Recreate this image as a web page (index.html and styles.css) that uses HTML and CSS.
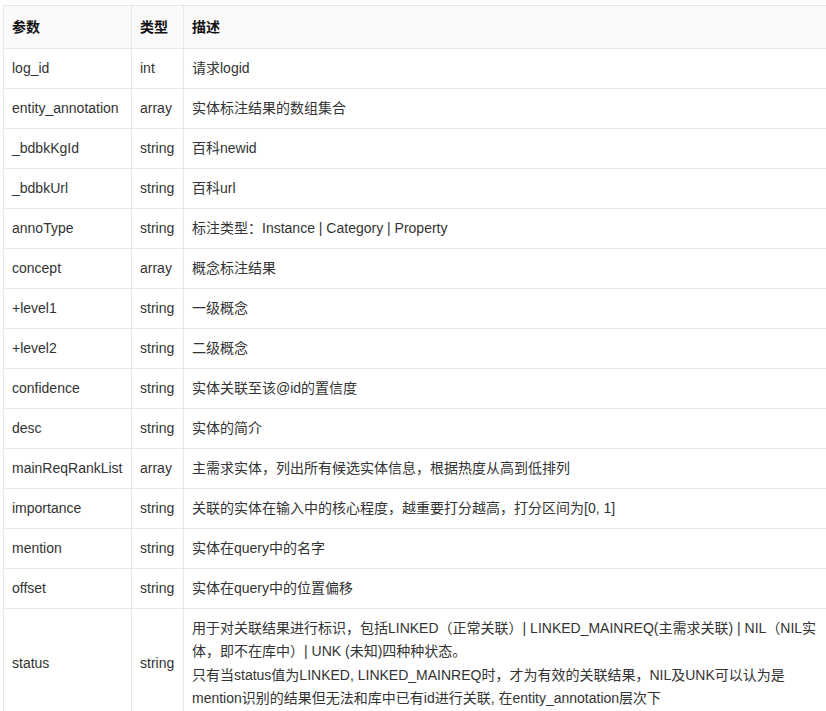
FILE: index.html
```html
<!DOCTYPE html>
<html lang="zh">
<head>
<meta charset="utf-8">
<link rel="stylesheet" href="styles.css">
</head>
<body>
<table class="params">
  <colgroup><col class="c1"><col class="c2"><col class="c3"></colgroup>
  <thead>
    <tr><th>参数</th><th>类型</th><th>描述</th></tr>
  </thead>
  <tbody>
    <tr><td>log_id</td><td>int</td><td>请求logid</td></tr>
    <tr><td>entity_annotation</td><td>array</td><td>实体标注结果的数组集合</td></tr>
    <tr><td>_bdbkKgId</td><td>string</td><td>百科newid</td></tr>
    <tr><td>_bdbkUrl</td><td>string</td><td>百科url</td></tr>
    <tr><td>annoType</td><td>string</td><td>标注类型：Instance | Category | Property</td></tr>
    <tr><td>concept</td><td>array</td><td>概念标注结果</td></tr>
    <tr><td>+level1</td><td>string</td><td>一级概念</td></tr>
    <tr><td>+level2</td><td>string</td><td>二级概念</td></tr>
    <tr><td>confidence</td><td>string</td><td>实体关联至该@id的置信度</td></tr>
    <tr><td>desc</td><td>string</td><td>实体的简介</td></tr>
    <tr><td>mainReqRankList</td><td>array</td><td>主需求实体，列出所有候选实体信息，根据热度从高到低排列</td></tr>
    <tr><td>importance</td><td>string</td><td>关联的实体在输入中的核心程度，越重要打分越高，打分区间为[0, 1]</td></tr>
    <tr><td>mention</td><td>string</td><td>实体在query中的名字</td></tr>
    <tr><td>offset</td><td>string</td><td>实体在query中的位置偏移</td></tr>
    <tr class="multi"><td>status</td><td>string</td><td class="long">用于对关联结果进行标识，包括LINKED（正常关联）| LINKED_MAINREQ(主需求关联) | NIL（NIL实<br>体，即不在库中）| UNK (未知)四种种状态。<br>只有当status值为LINKED, LINKED_MAINREQ时，才为有效的关联结果，NIL及UNK可以认为是<br>mention识别的结果但无法和库中已有id进行关联, 在entity_annotation层次下</td></tr>
  </tbody>
</table>
</body>
</html>
```
FILE: styles.css
```css
html, body {
  margin: 0;
  padding: 0;
  background: #ffffff;
}
body {
  padding: 5px 0 0 3px;
  overflow: hidden;
  font-family: "Liberation Sans", Arial, "Noto Sans CJK SC", sans-serif;
  font-size: 14px;
  color: #333333;
}
.params {
  border-collapse: collapse;
  table-layout: fixed;
  width: 830px;
}
.c1 { width: 128px; }
.c2 { width: 52px; }
.params th,
.params td {
  border: 1px solid #e8e8e8;
  padding: 8px 8px 8px 8px;
  line-height: 23px;
  text-align: left;
  vertical-align: middle;
  white-space: nowrap;
}
.params th {
  background: #fafafa;
  font-weight: bold;
  color: #111111;
  height: 26px;
}
.params td {
  height: 23px;
}
.params td.long {
  line-height: 23.3px;
}
```
